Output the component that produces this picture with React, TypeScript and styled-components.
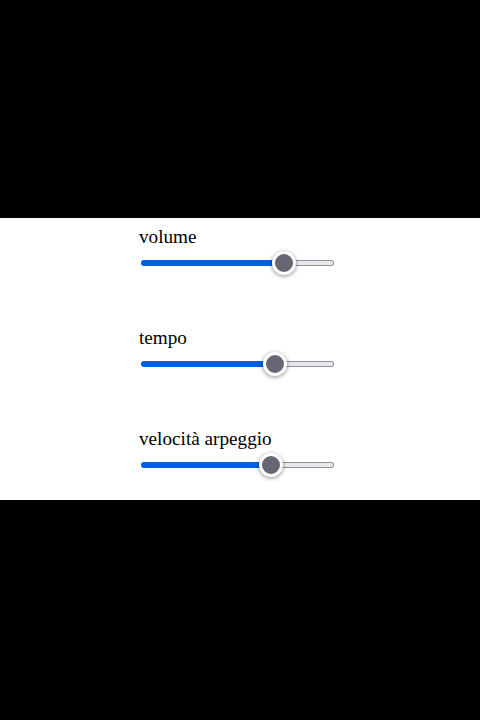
import React from "react";
import styled, { createGlobalStyle } from "styled-components";

const GlobalStyle = createGlobalStyle`
  html, body { margin: 0; padding: 0; background: #000; }
  body { font-family: "Liberation Serif", "Times New Roman", serif; }
`;

const Page = styled.div`
  min-height: 100vh;
  box-sizing: border-box;
  padding-bottom: 2px;
  display: flex;
  flex-direction: column;
  justify-content: center;
`;

const Panel = styled.main`
  background: #fff;
  display: flex;
  flex-direction: column;
  align-items: center;
  gap: 50px;
  padding: 8px 0 21px;
`;

const Group = styled.div`
  width: 202px;
  display: flex;
  flex-direction: column;
  gap: 1px;
`;

const Label = styled.label`
  font-family: "Liberation Serif", "Times New Roman", serif;
  font-size: 19.2px;
  line-height: 22px;
  color: #000;
`;

const SLIDER_W = 193;
const THUMB = 24;

const Slider = styled.div`
  position: relative;
  width: ${SLIDER_W}px;
  height: 28px;
  margin-left: 2px;
  display: flex;
  align-items: center;
`;

const Fill = styled.div`
  height: 6px;
  background: #0060df;
  border-radius: 3px 0 0 3px;
  flex: none;
`;

const Rest = styled.div`
  flex: 1;
  height: 6px;
  box-sizing: border-box;
  background: #e9e9ed;
  border: 1px solid #8f8f9d;
  border-left: none;
  border-radius: 0 3px 3px 0;
`;

const Thumb = styled.div`
  position: absolute;
  top: 2px;
  width: ${THUMB}px;
  height: ${THUMB}px;
  box-sizing: border-box;
  border-radius: 50%;
  background: #676774;
  border: 3px solid #fff;
  box-shadow: 0 1px 4px rgba(0, 0, 0, 0.45);
`;

const RangeSlider: React.FC<{ id: string; value: number }> = ({ id, value }) => {
  const travel = SLIDER_W - THUMB;
  const offset = (value / 100) * travel;
  return (
    <Slider id={id} role="slider" aria-valuemin={0} aria-valuemax={100} aria-valuenow={value}>
      <Fill style={{ width: offset + THUMB / 2 }} />
      <Rest />
      <Thumb style={{ left: offset }} />
    </Slider>
  );
};

const controls = [
  { id: "volume", label: "volume", value: 77.5 },
  { id: "tempo", label: "tempo", value: 72 },
  { id: "arp", label: "velocità arpeggio", value: 69.6 },
];

export default function App() {
  return (
    <>
      <GlobalStyle />
      <Page>
        <Panel>
          {controls.map((c) => (
            <Group key={c.id}>
              <Label htmlFor={c.id}>{c.label}</Label>
              <RangeSlider id={c.id} value={c.value} />
            </Group>
          ))}
        </Panel>
      </Page>
    </>
  );
}
